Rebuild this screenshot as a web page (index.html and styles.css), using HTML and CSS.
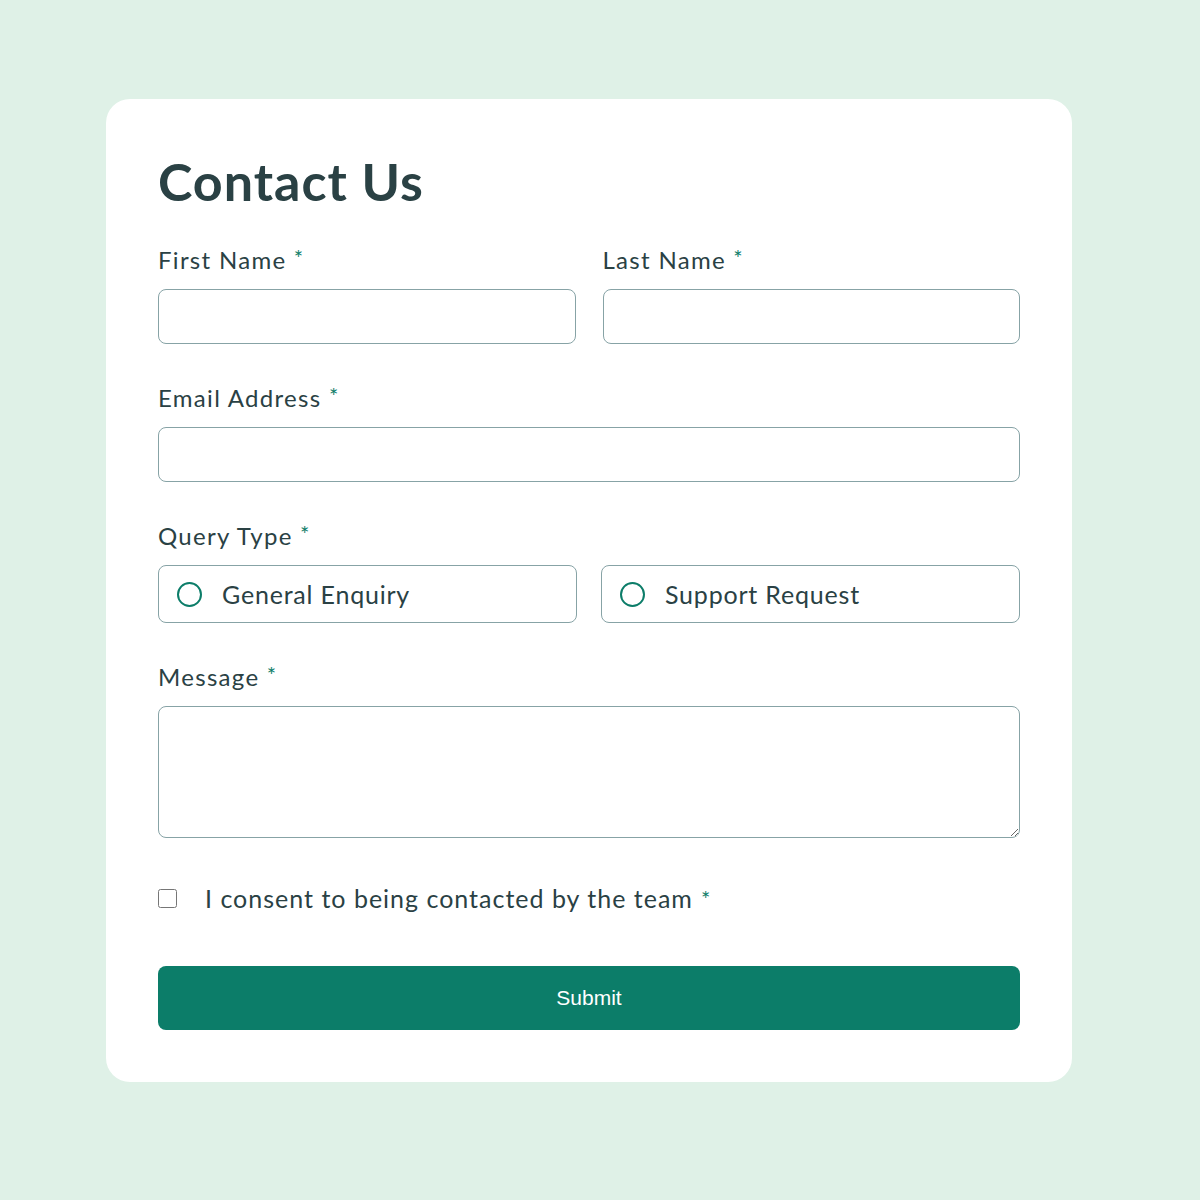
FILE: index.html
```html
<!DOCTYPE html>
<html lang="en">
<head>
    <meta charset="UTF-8">
    <meta name="viewport" content="width=device-width, initial-scale=1.0">
    <title>Contact Us</title>
    <link rel="stylesheet" href="styles.css">
</head>
<body>
    <div class="page">
        <form class="card">
            <h1>Contact Us</h1>
            <div class="row">
                <div class="field">
                    <label for="firstName">First Name <span class="req">*</span></label>
                    <input type="text" id="firstName" class="text-input">
                </div>
                <div class="field">
                    <label for="lastName">Last Name <span class="req">*</span></label>
                    <input type="text" id="lastName" class="text-input">
                </div>
            </div>
            <div class="field">
                <label for="email">Email Address <span class="req">*</span></label>
                <input type="email" id="email" class="text-input">
            </div>
            <div class="field">
                <span class="label">Query Type <span class="req">*</span></span>
                <div class="row radios">
                    <label class="radio-box">
                        <input type="radio" name="query" value="general">
                        <span class="dot"></span>
                        General Enquiry
                    </label>
                    <label class="radio-box">
                        <input type="radio" name="query" value="support">
                        <span class="dot"></span>
                        Support Request
                    </label>
                </div>
            </div>
            <div class="field">
                <label for="message">Message <span class="req">*</span></label>
                <textarea id="message" class="text-input message"></textarea>
            </div>
            <label class="consent">
                <input type="checkbox" class="check">
                I consent to being contacted by the team <span class="req">*</span>
            </label>
            <button type="submit" class="submit">Submit</button>
        </form>
    </div>
</body>
</html>
```

FILE: styles.css
```css
body {
    margin: 0;
    background: #dff1e7;
    font-family: Lato, "Noto Sans", sans-serif;
    color: #2a4144;
}
.page {
    padding: 99px 128px 118px 106px;
}
.card {
    background: #ffffff;
    border-radius: 24px;
    padding: 52px;
    display: flex;
    flex-direction: column;
}
h1 {
    margin: 0 0 32px;
    font-size: 52px;
    line-height: 60px;
    font-weight: 700;
    letter-spacing: 1px;
}
.row {
    display: grid;
    grid-template-columns: 1fr 1fr;
    gap: 27px;
}
.field {
    display: flex;
    flex-direction: column;
    margin-bottom: 37px;
}
.field label,
.field .label {
    font-size: 24px;
    line-height: 30px;
    margin-bottom: 14px;
    letter-spacing: 1.3px;
}
.req {
    color: #0c7d69;
    font-size: 22px;
    vertical-align: 3px;
}
.text-input {
    box-sizing: border-box;
    height: 55px;
    border: 1.5px solid #87a3a6;
    border-radius: 8px;
    font-family: inherit;
    font-size: 20px;
    padding: 0 16px;
}
.message {
    height: 132px;
    resize: vertical;
    margin: 0;
}
.radios {
    gap: 24px;
}
.field .radio-box {
    box-sizing: border-box;
    height: 58px;
    margin: 0;
    border: 1.5px solid #87a3a6;
    border-radius: 8px;
    display: flex;
    align-items: center;
    gap: 20px;
    padding: 0 18px;
    font-size: 25px;
    letter-spacing: 0.8px;
    cursor: pointer;
}
.radio-box input {
    display: none;
}
.dot {
    width: 21px;
    height: 21px;
    border: 2.5px solid #0c7d69;
    border-radius: 50%;
}
.consent {
    display: flex;
    align-items: center;
    font-size: 25px;
    letter-spacing: 1px;
    margin: 8px 0 53px;
}
.consent .req {
    margin-left: 8px;
}
.check {
    width: 19px;
    height: 19px;
    margin: 0 28px 0 0;
}
.submit {
    height: 64px;
    border: none;
    border-radius: 8px;
    background: #0c7d69;
    color: #ffffff;
    font-family: Arial, "Liberation Sans", sans-serif;
    font-size: 21px;
    cursor: pointer;
}
```
